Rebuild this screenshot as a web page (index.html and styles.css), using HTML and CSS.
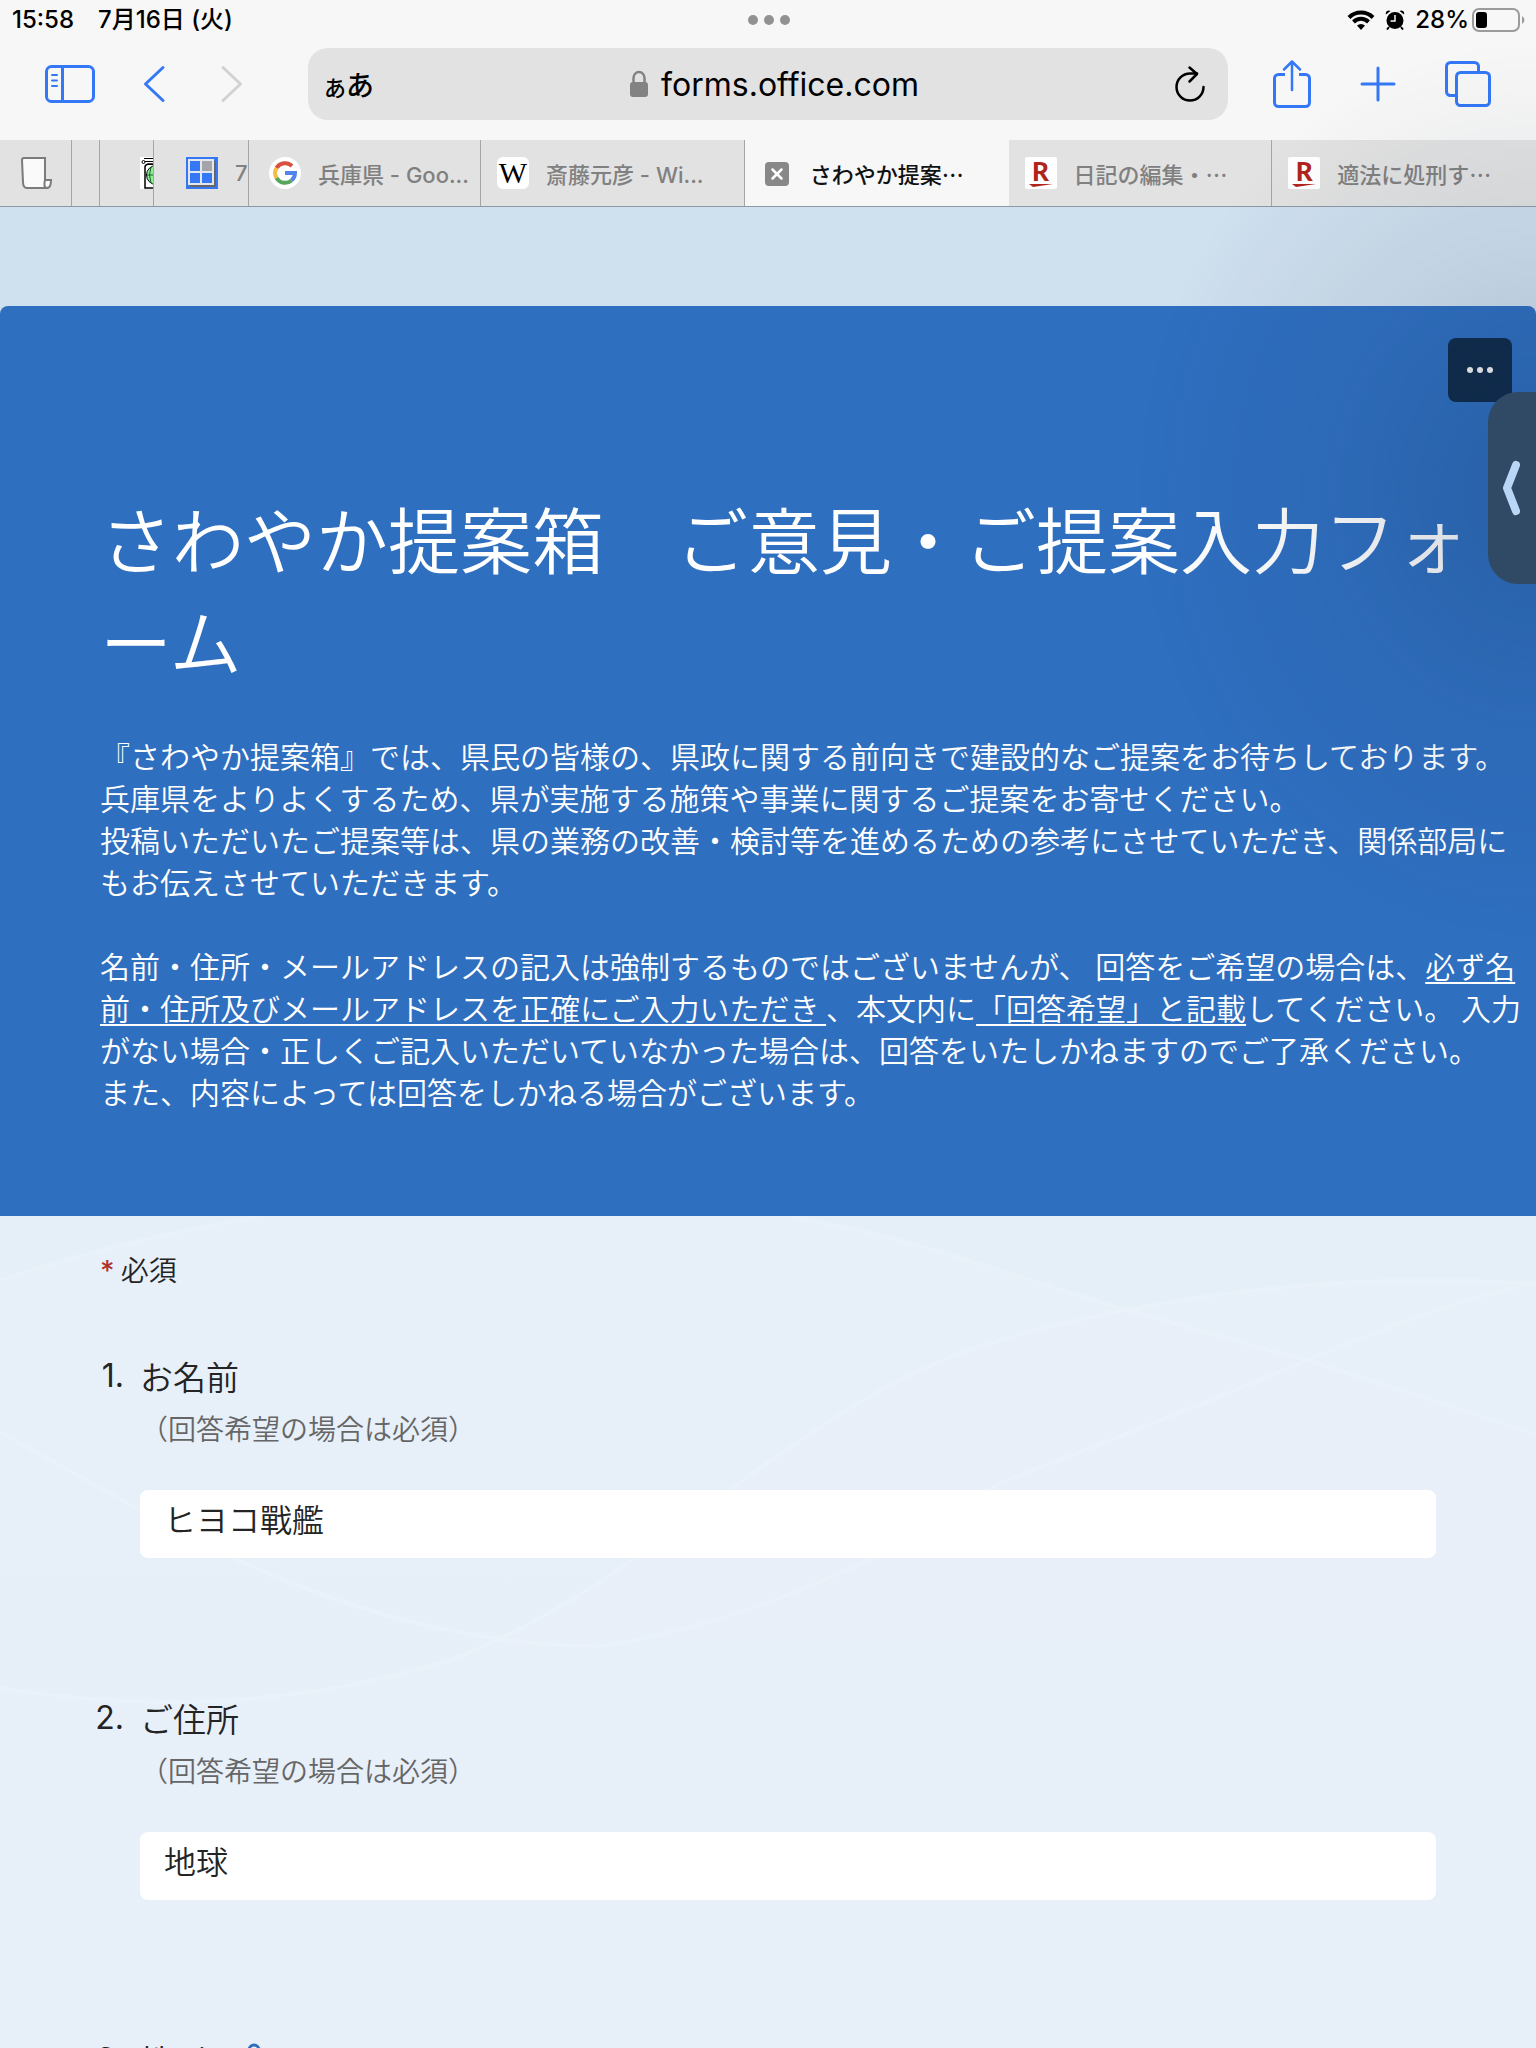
FILE: index.html
```html
<!DOCTYPE html>
<html lang="ja">
<head>
    <meta charset="UTF-8">
    <meta name="viewport" content="width=device-width, initial-scale=1.0">
    <title>さわやか提案箱　ご意見・ご提案入力フォーム</title>
    <link rel="stylesheet" href="styles.css">
</head>
<body>
    <header class="browser">
        <div class="status-bar">
            <div class="status-left">
                <span>15:58</span>
                <span>7月16日 (火)</span>
            </div>
            <svg class="dots" width="42" height="10" viewBox="0 0 42 10" fill="#929292"><circle cx="5" cy="5" r="5"/><circle cx="21" cy="5" r="5"/><circle cx="37" cy="5" r="5"/></svg>
            <div class="status-right">
                <svg width="28" height="20" viewBox="0 0 28 20" fill="none" stroke="#000" stroke-width="4"><path d="M2 7.500a17 17 0 0 1 24 0"/><path d="M6.500 12a10.500 10.500 0 0 1 15 0"/><path d="M14 20l-4-4.500a6 6 0 0 1 8 0z" fill="#000" stroke="none"/></svg>
                <svg width="20" height="20" viewBox="0 0 20 20"><circle cx="10" cy="10.500" r="8.500"/><path d="M1 4.500a3 3 0 0 1 4.500-3.500zM19 4.500a3 3 0 0 0-4.500-3.500z"/><path d="M4 17l-2 2.500M16 17l2 2.500" stroke="#000" stroke-width="2"/><path d="M10 5v6H5.500" fill="none" stroke="#f7f7f7" stroke-width="1.500"/></svg>
                <span>28%</span>
                <svg class="battery" width="54" height="24" viewBox="0 0 54 24"><rect x="1" y="1" width="46" height="22" rx="6" fill="none" stroke="#9b9b9b" stroke-width="2"/><rect x="4" y="4" width="11" height="16" rx="3"/><path d="M50 8a4.500 4.500 0 0 1 0 8z" fill="#9b9b9b"/></svg>
            </div>
        </div>

        <div class="toolbar">
            <div class="tools tools-left">
                <button class="tool" aria-label="サイドバー">
                    <svg width="52" height="40" viewBox="0 0 52 40" fill="none" stroke="#3478f6" stroke-width="3"><rect x="2.500" y="2.500" width="47" height="35" rx="5"/><path d="M18.500 2v36"/><path d="M8 11h5M8 16.500h5M8 22h5" stroke-width="2" stroke-linecap="round"/></svg>
                </button>
                <button class="tool" aria-label="戻る">
                    <svg width="28" height="40" viewBox="0 0 28 40" fill="none" stroke="#3478f6" stroke-width="3" stroke-linecap="round" stroke-linejoin="round"><path d="M23 3.500L5.500 20 23 36.500"/></svg>
                </button>
                <button class="tool" aria-label="進む" disabled>
                    <svg width="34" height="40" viewBox="-6 0 34 40" fill="none" stroke="#d2d2d2" stroke-width="3" stroke-linecap="round" stroke-linejoin="round"><path d="M5 3.500L22.500 20 5 36.500"/></svg>
                </button>
            </div>
            <div class="address">
                <button class="reader" aria-label="ページ設定"><span class="reader-small">あ</span>あ</button>
                <a class="url" href="#">
                    <svg width="20" height="28" viewBox="0 0 20 28"><path d="M4.500 13V8a5.500 6 0 0 1 11 0v5" fill="none" stroke="#828282" stroke-width="2.500"/><rect x="1" y="12" width="18" height="15" rx="3" fill="#828282"/></svg>
                    forms.office.com
                </a>
                <button class="tool" aria-label="再読み込み">
                    <svg width="32" height="38" viewBox="0 0 32 38" fill="none" stroke="#000" stroke-width="2.500" stroke-linecap="round" stroke-linejoin="round"><path d="M29.500 22A13.500 13.500 0 1 1 16 8.500h7"/><path d="M15.500 2.500l7.500 6.500-7.500 7.500"/></svg>
                </button>
            </div>
            <div class="tools tools-right">
                <button class="tool" aria-label="共有">
                    <svg width="42" height="50" viewBox="0 0 42 50" fill="none" stroke="#3478f6" stroke-width="3" stroke-linecap="round" stroke-linejoin="round"><path d="M14 15.500H7.500a4 4 0 0 0-4 4v24a4 4 0 0 0 4 4h27a4 4 0 0 0 4-4v-24a4 4 0 0 0-4-4H28" stroke-linecap="butt"/><path d="M21 31V3M13 10.500L21 2.500l8 8" stroke-width="2.500"/></svg>
                </button>
                <button class="tool" aria-label="新規タブ">
                    <svg width="38" height="38" viewBox="0 0 38 38" fill="none" stroke="#3478f6" stroke-width="3" stroke-linecap="round"><path d="M19 3v32M3 19h32"/></svg>
                </button>
                <button class="tool" aria-label="タブ一覧">
                    <svg width="50" height="46" viewBox="0 0 50 46" fill="none" stroke="#3478f6" stroke-width="3"><path d="M13 34.500H7.500a4 4 0 0 1-4-4v-25a4 4 0 0 1 4-4h24a4 4 0 0 1 4 4V11"/><rect x="13.500" y="11.500" width="33" height="33" rx="4"/></svg>
                </button>
            </div>
        </div>

        <nav class="tabs">
            <a class="tab tab-note" href="#" aria-label="メモ">
                <svg width="32" height="34" viewBox="0 0 32 34" fill="#fafafa" stroke="#7b7b7b" stroke-width="2"><path d="M2 4a2 2 0 0 1 2-2h21v23c0 4 1 7 3 7H7c-3 0-4-3-4-6z"/><path d="M25 24h6c0 5-1 8-4 8s-3-4-2-8z"/></svg>
            </a>
            <a class="tab" href="#" aria-label="タブ"></a>
            <a class="tab tab-jar" href="#" aria-label="タブ">
                <svg width="32" height="32" viewBox="0 0 32 32"><path fill="#fff" d="M0 0h32v32H0z"/><path d="M5 10q0-2 3-3h16q3 1 3 3v21H5z" fill="#fff" stroke="#000" stroke-width="1.500"/><path d="M4 1.500h24M4 4.500h24M6 7.500h20" stroke="#000"/><circle cx="3.500" cy="5" r="1.500" fill="#fff" stroke="#000"/><circle cx="16" cy="18" r="9.500" fill="#8cf08c" stroke="#000" stroke-width="1"/><path d="M7 18h18M16 9v18M11 10q-3 8 0 16" fill="none" stroke="#1a5c3a"/></svg>
            </a>
            <a class="tab tab-seven" href="#">
                <svg width="32" height="32" viewBox="0 0 32 32"><path fill="#3478f6" d="M0 0h32v32H0z"/><path fill="#666" d="M4 4h26v26H4z"/><path fill="#e4e6ee" d="M2 2h26v26H2z"/><path fill="#3478f6" d="M4 4h10v10H4zM4 16h10v10H4zM16 16h10v10H16z"/><path fill="#a3a5aa" d="M16 4h10v10H16z"/></svg>
                <span>7</span>
            </a>
            <a class="tab tab-google" href="#">
                <svg width="32" height="32" viewBox="0 0 32 32" fill="none" stroke-width="4"><circle cx="16" cy="16" r="16" fill="#fff"/><path d="M7.500 11a10 10 0 0 1 15.500-2" stroke="#d85040"/><path d="M7.500 21a10 10 0 0 1 0-10" stroke="#f2bd42"/><path d="M22.500 23.500a10 10 0 0 1-15-2.500" stroke="#58a55c"/><path d="M16 16h10a10 10 0 0 1-3.500 7.500" stroke="#5383ec"/></svg>
                <span>兵庫県 - Goo...</span>
            </a>
            <a class="tab" href="#">
                <span class="favicon favicon-w">W</span>
                <span>斎藤元彦 - Wi...</span>
            </a>
            <a class="tab tab-active" href="#">
                <svg width="32" height="32" viewBox="0 0 32 32"><rect x="4" y="5" width="24" height="24" rx="4" fill="#888"/><path d="M11.500 12.500l9 9M20.500 12.500l-9 9" stroke="#fff" stroke-width="2.500" stroke-linecap="round"/></svg>
                <span class="title-ja">さわやか提案…</span>
            </a>
            <a class="tab" href="#">
                <span class="favicon favicon-r">R<svg width="24" height="4" viewBox="0 0 24 4"><path d="M0 0h24L4 3z" fill="#b1241b"/></svg></span>
                <span class="title-ja">日記の編集・…</span>
            </a>
            <a class="tab" href="#">
                <span class="favicon favicon-r">R<svg width="24" height="4" viewBox="0 0 24 4"><path d="M0 0h24L4 3z" fill="#b1241b"/></svg></span>
                <span class="title-ja">適法に処刑す…</span>
            </a>
        </nav>
    </header>

    <main class="page">
        <section class="hero">
            <button class="more" aria-label="その他">
                <svg width="26" height="6" viewBox="0 0 26 6" fill="#f4f4f4"><circle cx="3" cy="3" r="3"/><circle cx="13" cy="3" r="3"/><circle cx="23" cy="3" r="3"/></svg>
            </button>
            <h1>さわやか提案箱　ご意見・ご提案入力フォーム</h1>
            <p>『さわやか提案箱』では、県民の皆様の、県政に関する前向きで建設的なご提案をお待ちしております。<br>
            兵庫県をよりよくするため、県が実施する施策や事業に関するご提案をお寄せください。<br>
            投稿いただいたご提案等は、県の業務の改善・検討等を進めるための参考にさせていただき、関係部局にもお伝えさせていただきます。</p>
            <p>名前・住所・メールアドレスの記入は強制するものではございませんが、 回答をご希望の場合は、<u>必ず名前・住所及びメールアドレスを正確にご入力いただき </u>、本文内に<u>「回答希望」と記載</u>してください。 入力がない場合・正しくご記入いただいていなかった場合は、回答をいたしかねますのでご了承ください。<br>
            また、内容によっては回答をしかねる場合がございます。</p>
        </section>

        <form class="questions">
            <!-- 背景の曲線 -->
            <svg class="waves" viewBox="0 0 1536 832">
                <defs>
                    <linearGradient id="wave-fill" x1="0" y1="0" x2="0" y2="1">
                        <stop offset="0" stop-color="#eaf0fa" stop-opacity="0.6"/>
                        <stop offset="1" stop-color="#eaf0fa" stop-opacity="0.3"/>
                    </linearGradient>
                </defs>
                <g fill="url(#wave-fill)">
                    <path d="M0 64Q120 24 260 0H790Q900 20 1000 54T1308 144L1536 218V832H0z"/>
                    <path d="M450 444C650 370 800 180 1000 124Q1260 50 1536 67V832H0V472Q240 510 450 444z"/>
                </g>
                <g fill="none" stroke="#eef5fb" stroke-opacity="0.4" stroke-width="4">
                    <path d="M0 64Q120 24 260 0"/>
                    <path d="M790 0Q900 20 1000 54T1308 144L1536 218"/>
                    <path d="M0 472Q240 510 450 444C650 370 800 180 1000 124Q1260 50 1536 67"/>
                    <path d="M0 216L140 294Q380 430 600 430Q800 400 1000 267Q1160 206 1308 144T1536 67"/>
                </g>
            </svg>
            <p class="required-note"><span class="star">*</span> 必須</p>

            <div class="question">
                <span class="number">1.</span>
                <label for="name">お名前</label>
                <p class="hint">（回答希望の場合は必須）</p>
                <input type="text" id="name" value="ヒヨコ戰艦">
            </div>

            <div class="question">
                <span class="number">2.</span>
                <label for="address">ご住所</label>
                <p class="hint">（回答希望の場合は必須）</p>
                <input type="text" id="address" value="地球">
            </div>

            <div class="question">
                <span class="number">3.</span>
                <span class="label">性別 <svg width="24" height="30" viewBox="0 0 24 30" fill="none" stroke="#2f6ebf" stroke-width="3"><circle cx="12" cy="12" r="5"/><path d="M3 29a9 8 0 0 1 18 0"/></svg></span>
            </div>
        </form>
    </main>

    <div class="edge-shade"></div>
    <button class="drawer" aria-label="パネルを開く">
        <svg width="20" height="56" viewBox="0 0 20 56" fill="none" stroke="#b9d6f7" stroke-width="8" stroke-linecap="round" stroke-linejoin="round"><path d="M14 5L5 28l9 23"/></svg>
    </button>
</body>
</html>
```
FILE: styles.css
```css
* {
    box-sizing: border-box;
}
body {
    font-family: 'Inter', 'Noto Sans CJK JP', sans-serif;
    display: flex;
    flex-direction: column;
    height: 100vh;
    margin: 0;
    background-color: #f7f7f7;
    overflow: hidden;
}
button {
    border: none;
    background: none;
    padding: 0;
    font-family: inherit;
    cursor: pointer;
}
svg {
    display: block;
    flex: none;
}
a {
    color: inherit;
    text-decoration: none;
}

/* ステータスバー */
.status-bar {
    display: grid;
    grid-template-columns: 1fr auto 1fr;
    align-items: center;
    height: 40px;
    padding: 0 10px 0 12px;
    font-size: 24px;
    font-weight: 500;
    line-height: 32px;
}
.status-left {
    display: flex;
    align-items: baseline;
    gap: 24px;
}
.status-right {
    display: flex;
    justify-content: flex-end;
    align-items: center;
    gap: 10px;
}
.battery {
    margin-left: -7px;
}

/* ツールバー */
.toolbar {
    display: flex;
    align-items: center;
    padding: 8px 0 20px;
}
.tools {
    display: flex;
    align-items: center;
    width: 308px;
}
.tools-left {
    gap: 44px;
    padding-left: 44px;
}
.tools-right {
    gap: 46px;
    padding-left: 43px;
}
.address {
    flex: 1;
    display: flex;
    align-items: center;
    justify-content: space-between;
    height: 72px;
    padding: 0 22px 0 16px;
    border-radius: 20px;
    background: #e2e2e2;
}
.reader {
    font-size: 28px;
    font-weight: 500;
    color: #000;
}
.reader-small {
    font-size: 22px;
}
.url {
    display: flex;
    align-items: center;
    gap: 12px;
    font-size: 32px;
}

/* タブ */
.tabs {
    display: grid;
    grid-template-columns: 72px 28px 54px 95px 232px repeat(4, minmax(0, 1fr));
    height: 67px;
    border-bottom: 1px solid #8e99a5;
}
.tab {
    display: flex;
    align-items: center;
    gap: 17px;
    padding-left: 16px;
    border-right: 1px solid #a5a5a5;
    background: #e2e2e2;
    color: #808080;
    font-size: 22px;
    font-weight: 500;
    white-space: nowrap;
    overflow: hidden;
}
.tab:last-child {
    border-right: none;
}
.tab-note,
.tab-google {
    padding-left: 20px;
}
.tab-jar {
    padding-left: 40px;
}
.tab-seven {
    padding-left: 32px;
}
.tab-active {
    background: #f7f7f7;
    border-color: #f7f7f7;
    color: #111;
}
.title-ja {
    font-family: 'Noto Sans CJK JP', sans-serif;
}
.favicon {
    display: flex;
    flex-direction: column;
    align-items: center;
    justify-content: center;
    width: 32px;
    height: 32px;
    background: #fff;
    line-height: 1;
}
.favicon-w {
    border-radius: 6px;
    font-family: 'Liberation Serif', serif;
    font-size: 30px;
    color: #000;
}
.favicon-r {
    border-radius: 2px;
    font-family: 'Lato', sans-serif;
    font-weight: 900;
    font-size: 26px;
    color: #b1241b;
}

/* フォーム本体 */
.page {
    flex: 1;
    display: flex;
    flex-direction: column;
    overflow-y: auto;
    scrollbar-width: none;
    padding-top: 99px;
    background: #cfe0ef;
    font-family: 'Noto Sans CJK JP', sans-serif;
    font-weight: 350;
}
.hero {
    position: relative;
    flex: none;
    padding: 180px 8px 104px 100px;
    border-radius: 8px 8px 0 0;
    background: #2f6fc0;
    color: #fff;
    line-break: loose;
}
.hero h1 {
    margin: 0 0 44px;
    font-size: 72px;
    font-weight: 350;
    line-height: 102px;
}
.hero p {
    margin: 0 0 42px;
    font-size: 30px;
    line-height: 42px;
}
.hero p:last-child {
    margin-bottom: 0;
}
.hero u {
    text-underline-offset: 4px;
    text-decoration-thickness: 2px;
}
.more {
    position: absolute;
    top: 32px;
    right: 24px;
    display: flex;
    align-items: center;
    justify-content: center;
    width: 64px;
    height: 64px;
    border-radius: 8px;
    background: #0f2b4b;
}
.questions {
    position: relative;
    flex: 1 0 auto;
    padding: 32px 100px 0;
    background: #e4eff7;
    color: #242424;
}
.waves {
    position: absolute;
    top: 0;
    left: 0;
    width: 100%;
    height: auto;
}
.required-note {
    position: relative;
    margin: 0 0 62px;
    font-size: 28px;
    line-height: 42px;
}
.star {
    font-family: 'Inter', sans-serif;
    font-weight: 500;
    color: #b3312c;
}
.question {
    position: relative;
    display: grid;
    grid-template-columns: 40px 1fr;
    margin-bottom: 138px;
    font-size: 33px;
    line-height: 44px;
}
.number {
    padding-right: 16px;
    font-family: 'Inter', sans-serif;
    font-weight: 400;
    font-size: 32px;
    display: flex;
    justify-content: flex-end;
}
.label {
    display: flex;
    gap: 36px;
}
.hint {
    grid-column: 2;
    margin: 8px 0 40px;
    font-size: 28px;
    line-height: 44px;
    color: #666;
}
.question input {
    grid-column: 2;
    height: 68px;
    padding: 0 24px 12px;
    border: none;
    border-radius: 8px;
    background: #fff;
    font-family: inherit;
    font-weight: 350;
    font-size: 32px;
    color: #242424;
}

/* 画面右端のパネル */
.edge-shade {
    position: absolute;
    top: 40px;
    right: 0;
    width: 400px;
    height: 900px;
    background: radial-gradient(ellipse 400px 450px at 100% 50%, rgba(20, 40, 70, 0.2), rgba(20, 40, 70, 0.08) 50%, rgba(20, 40, 70, 0));
    pointer-events: none;
}
.drawer {
    position: absolute;
    top: 392px;
    right: 0;
    display: flex;
    align-items: center;
    justify-content: center;
    width: 48px;
    height: 192px;
    border-radius: 30px 0 0 30px;
    background: #304a65;
}
```
